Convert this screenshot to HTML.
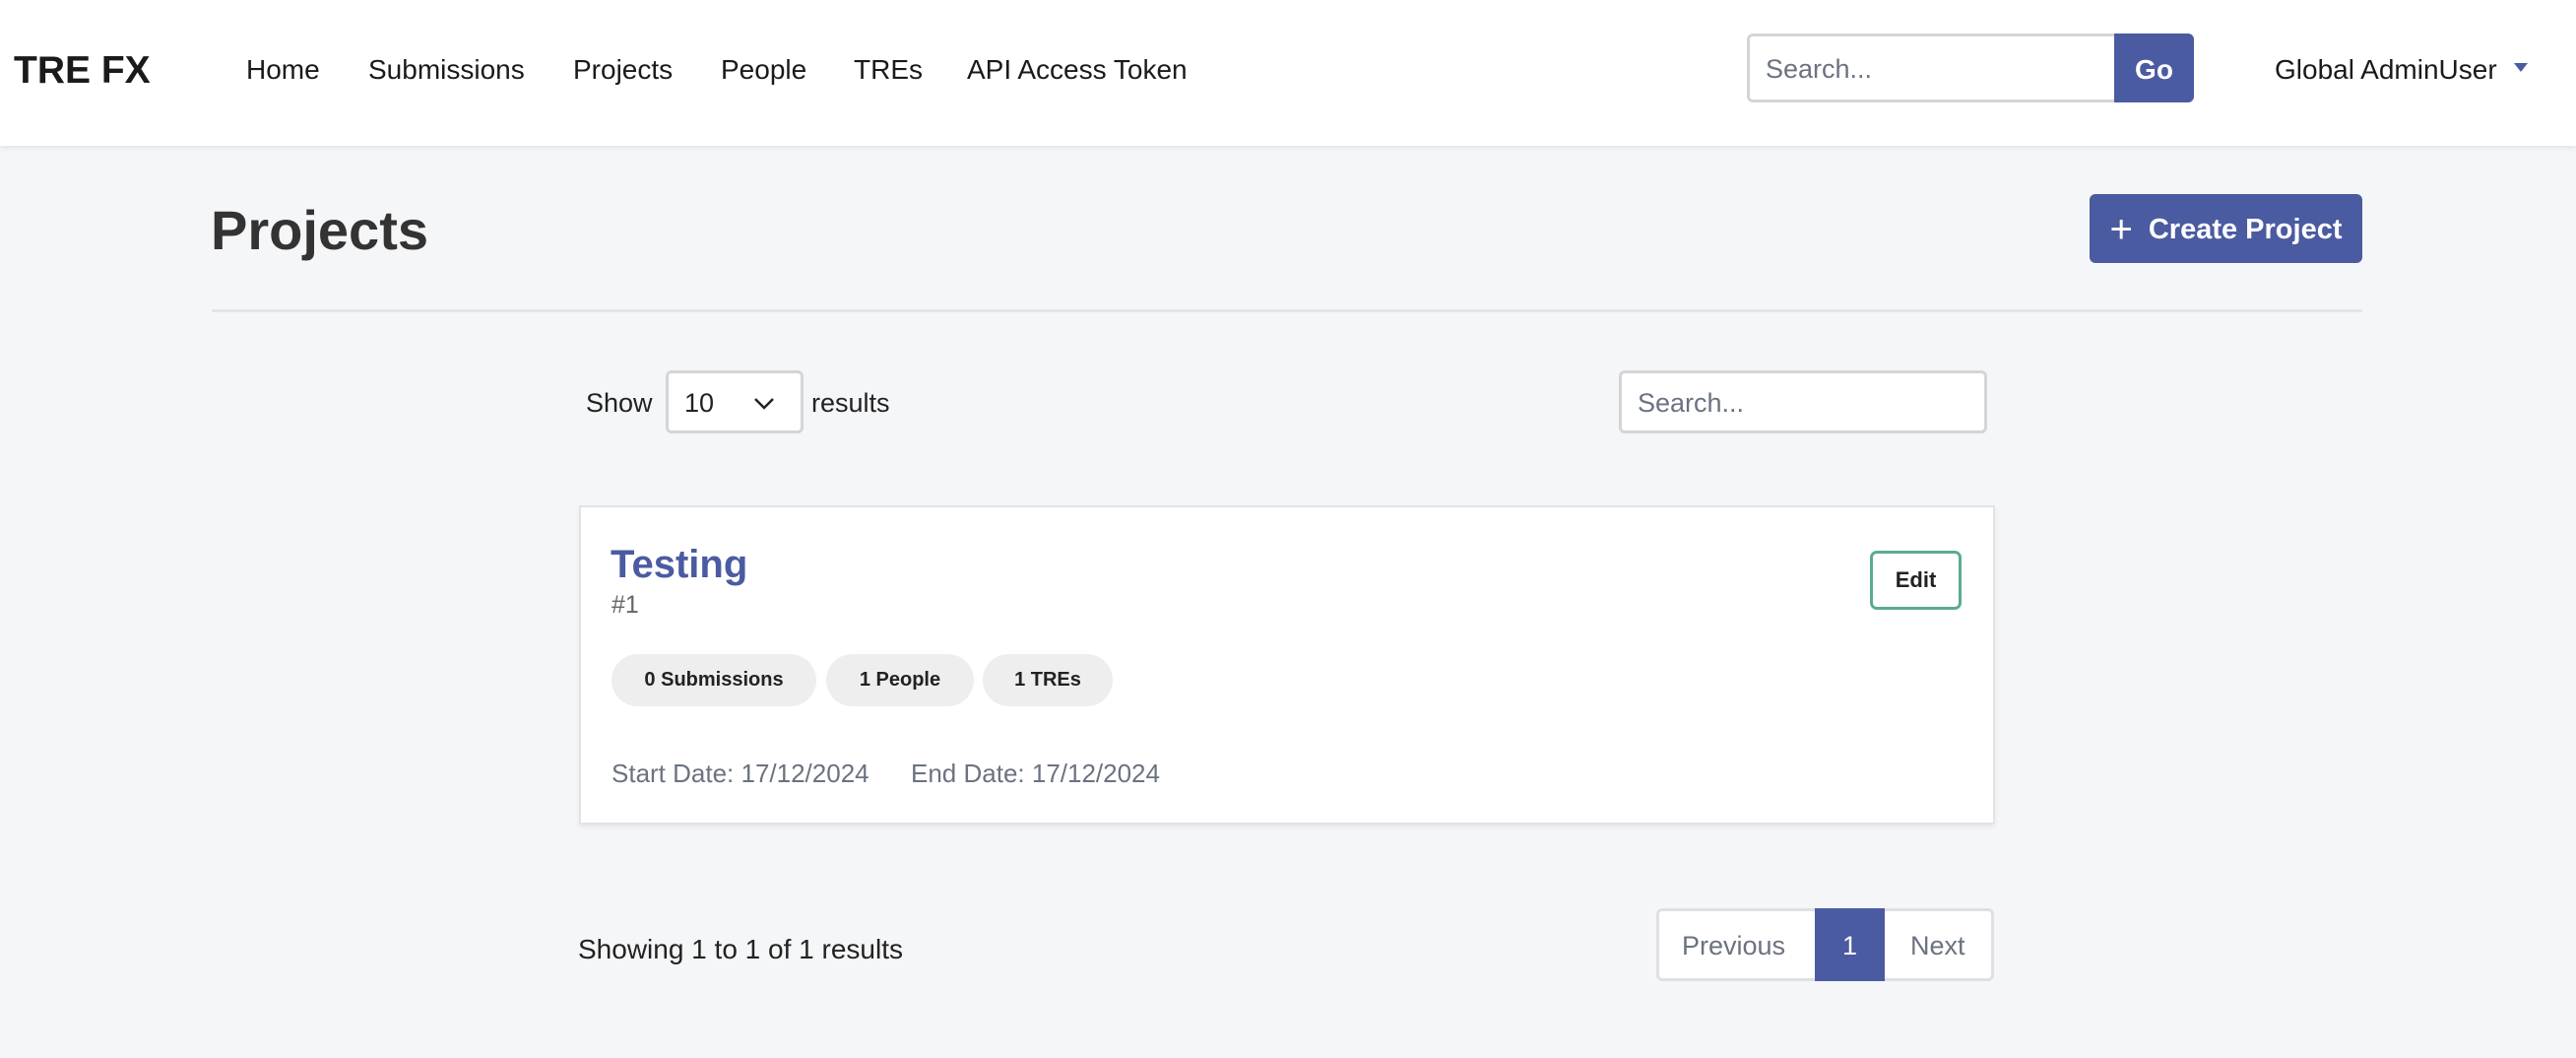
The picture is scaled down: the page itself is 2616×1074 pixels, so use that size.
<!DOCTYPE html>
<html><head><meta charset="utf-8"><style>
*{box-sizing:border-box;margin:0;padding:0}
body{width:2616px;height:1074px;background:#f5f6f8;font-family:"Liberation Sans",Arial,sans-serif;position:relative;overflow:hidden;color:#222}
.a{position:absolute;white-space:nowrap}
nav{position:absolute;left:0;top:0;width:2616px;height:148px;background:#fff;box-shadow:0 2px 6px rgba(0,0,0,.08)}
.nl{font-size:28px;color:#1a1a1a;top:55px}
.btn{background:#4b5ba1;color:#fff;font-weight:bold;display:flex;align-items:center;justify-content:center}
.inp{background:#fff;border:3px solid #d4d5d8;border-radius:6px;color:#6b7280;font-size:27px;display:flex;align-items:center}
.badge{background:#eeeeee;border-radius:27px;font-weight:bold;font-size:20px;height:53px;top:664px;display:flex;align-items:center;justify-content:center;color:#222}
</style></head><body>
<nav>
<div class="a" style="left:14px;top:50px;font-size:39px;font-weight:bold;color:#1a1a1a">TRE FX</div>
<div class="a nl" style="left:250px">Home</div>
<div class="a nl" style="left:374px">Submissions</div>
<div class="a nl" style="left:582px">Projects</div>
<div class="a nl" style="left:732px">People</div>
<div class="a nl" style="left:867px">TREs</div>
<div class="a nl" style="left:982px">API Access Token</div>
<div class="a inp" style="left:1774px;top:34px;width:380px;height:70px;border-radius:6px 0 0 6px;padding-left:16px;padding-top:3px">Search...</div>
<div class="a btn" style="left:2147px;top:34px;width:81px;height:70px;border-radius:0 6px 6px 0;font-size:28px;padding-top:3px">Go</div>
<div class="a" style="left:2310px;top:55px;font-size:28px;color:#1a1a1a">Global AdminUser</div>
<div class="a" style="left:2553px;top:64px;width:0;height:0;border-left:7px solid transparent;border-right:7px solid transparent;border-top:9px solid #4b5ba1"></div>
</nav>
<div class="a" style="left:214px;top:201px;font-size:56px;font-weight:bold;color:#333">Projects</div>
<div class="a btn" style="left:2122px;top:197px;width:277px;height:70px;border-radius:6px;font-size:29px;padding-top:2px"><span style="font-weight:normal;font-size:40px;margin-right:16px;line-height:1">+</span>Create Project</div>
<div class="a" style="left:215px;top:314px;width:2184px;height:3px;background:#e4e5e8"></div>
<div class="a" style="left:595px;top:394px;font-size:27px;color:#222">Show</div>
<div class="a inp" style="left:676px;top:376px;width:140px;height:64px;color:#222;padding-left:16px;padding-top:2px">10
<svg style="position:absolute;left:86px;top:24px" width="22" height="13" viewBox="0 0 22 13"><path d="M2 2l9 9 9-9" fill="none" stroke="#222" stroke-width="2.5"/></svg></div>
<div class="a" style="left:824px;top:394px;font-size:27px;color:#222">results</div>
<div class="a inp" style="left:1644px;top:376px;width:374px;height:64px;padding-left:16px;padding-top:2px">Search...</div>
<div class="a" style="left:588px;top:513px;width:1438px;height:324px;background:#fff;border:2px solid #e2e3e6;box-shadow:0 3px 5px rgba(0,0,0,.06)"></div>
<div class="a" style="left:620px;top:551px;font-size:40px;font-weight:bold;color:#4b5ba1">Testing</div>
<div class="a" style="left:621px;top:600px;font-size:25px;color:#666">#1</div>
<div class="a" style="left:1899px;top:559px;width:93px;height:60px;border:3px solid #5aad8c;border-radius:7px;background:#fff;font-size:22px;font-weight:bold;display:flex;align-items:center;justify-content:center;color:#222">Edit</div>
<div class="a badge" style="left:621px;width:208px">0 Submissions</div>
<div class="a badge" style="left:839px;width:150px">1 People</div>
<div class="a badge" style="left:998px;width:132px">1 TREs</div>
<div class="a" style="left:621px;top:770px;font-size:26px;color:#6b7280">Start Date: 17/12/2024</div>
<div class="a" style="left:925px;top:770px;font-size:26px;color:#6b7280">End Date: 17/12/2024</div>
<div class="a" style="left:587px;top:948px;font-size:28px;color:#222">Showing 1 to 1 of 1 results</div>
<div class="a" style="left:1682px;top:922px;width:343px;height:74px;border:3px solid #dfe0e4;border-radius:6px;background:#fff"></div>
<div class="a" style="left:1708px;top:945px;font-size:27px;color:#6b7280">Previous</div>
<div class="a btn" style="left:1843px;top:922px;width:71px;height:74px;font-weight:normal;font-size:27px;padding-top:3px">1</div>
<div class="a" style="left:1940px;top:945px;font-size:27px;color:#6b7280">Next</div>
</body></html>
